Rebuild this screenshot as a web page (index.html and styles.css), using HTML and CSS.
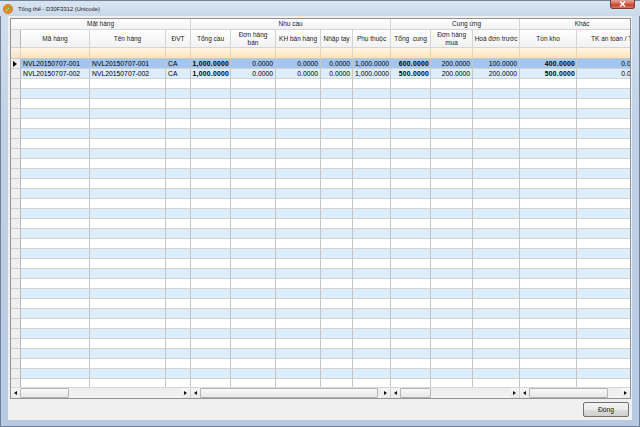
FILE: index.html
```html
<!DOCTYPE html>
<html lang="vi">
<head>
<meta charset="utf-8">
<title>Tổng thể - D30F3312 (Unicode)</title>
<link rel="stylesheet" href="styles.css">
</head>
<body>
<div class="window">
  <div class="titlebar">
    <svg class="app-icon" width="10" height="10" viewBox="0 0 10 10">
      <circle cx="5" cy="5" r="4.6" fill="#f08a1c" stroke="#c25f08" stroke-width="0.6"/>
      <path d="M3 7 C3 4 5 2.5 7.5 2.5 C7.5 5 6 7 3 7 Z" fill="#5fb83a"/>
      <path d="M3 7 L6 4" stroke="#fff" stroke-width="0.6"/>
    </svg>
    <span class="title">Tổng thể - D30F3312 (Unicode)</span>
    <div class="close-btn">
      <svg width="7" height="6" viewBox="0 0 7 6"><path d="M1 0.5 L6 5.5 M6 0.5 L1 5.5" stroke="#fff" stroke-width="1.4"/></svg>
    </div>
  </div>
  <div class="frame">
    <div class="client">
      <div class="grid">
        <div class="grid-body">
          <table class="data">
            <colgroup>
              <col class="c-ind"><col class="c-ma"><col class="c-ten"><col class="c-dvt">
              <col class="c-tc"><col class="c-dhb"><col class="c-kh"><col class="c-nt"><col class="c-pt">
              <col class="c-tcu"><col class="c-dhm"><col class="c-hd">
              <col class="c-ton"><col class="c-tk">
            </colgroup>
            <thead>
              <tr class="band">
                <th colspan="4">Mặt hàng</th>
                <th colspan="5">Nhu cầu</th>
                <th colspan="3" class="cung">Cung ứng</th>
                <th colspan="2">Khác</th>
              </tr>
              <tr class="cols">
                <th class="ind"></th>
                <th>Mã hàng</th>
                <th>Tên hàng</th>
                <th>ĐVT</th>
                <th>Tổng cầu</th>
                <th>Đơn hàng<br>bán</th>
                <th>KH bán hàng</th>
                <th>Nhập tay</th>
                <th>Phụ thuộc</th>
                <th>Tổng&nbsp; cung</th>
                <th>Đơn hàng<br>mua</th>
                <th>Hoá đơn trước</th>
                <th>Tồn kho</th>
                <th class="tk">TK an toàn / Tối thiểu</th>
              </tr>
              <tr class="filter">
                <td class="ind"></td><td></td><td></td><td></td><td></td><td></td><td></td><td></td><td></td><td></td><td></td><td></td><td></td><td></td>
              </tr>
            </thead>
            <tbody>
              <tr class="sel">
                <td class="ind"><span class="cur"></span></td>
                <td>NVL20150707-001</td>
                <td>NVL20150707-001</td>
                <td>CA</td>
                <td class="num b">1,000.0000</td>
                <td class="num">0.0000</td>
                <td class="num">0.0000</td>
                <td class="num">0.0000</td>
                <td class="num">1,000.0000</td>
                <td class="num b">600.0000</td>
                <td class="num">200.0000</td>
                <td class="num">100.0000</td>
                <td class="num b">400.0000</td>
                <td class="num">0.0000</td>
              </tr>
              <tr>
                <td class="ind"></td>
                <td>NVL20150707-002</td>
                <td>NVL20150707-002</td>
                <td>CA</td>
                <td class="num b">1,000.0000</td>
                <td class="num">0.0000</td>
                <td class="num">0.0000</td>
                <td class="num">0.0000</td>
                <td class="num">1,000.0000</td>
                <td class="num b">500.0000</td>
                <td class="num">200.0000</td>
                <td class="num">200.0000</td>
                <td class="num b">500.0000</td>
                <td class="num">0.0000</td>
              </tr>
              <tr><td class="ind"></td><td></td><td></td><td></td><td></td><td></td><td></td><td></td><td></td><td></td><td></td><td></td><td></td><td></td></tr>
              <tr><td class="ind"></td><td></td><td></td><td></td><td></td><td></td><td></td><td></td><td></td><td></td><td></td><td></td><td></td><td></td></tr>
              <tr><td class="ind"></td><td></td><td></td><td></td><td></td><td></td><td></td><td></td><td></td><td></td><td></td><td></td><td></td><td></td></tr>
              <tr><td class="ind"></td><td></td><td></td><td></td><td></td><td></td><td></td><td></td><td></td><td></td><td></td><td></td><td></td><td></td></tr>
              <tr><td class="ind"></td><td></td><td></td><td></td><td></td><td></td><td></td><td></td><td></td><td></td><td></td><td></td><td></td><td></td></tr>
              <tr><td class="ind"></td><td></td><td></td><td></td><td></td><td></td><td></td><td></td><td></td><td></td><td></td><td></td><td></td><td></td></tr>
              <tr><td class="ind"></td><td></td><td></td><td></td><td></td><td></td><td></td><td></td><td></td><td></td><td></td><td></td><td></td><td></td></tr>
              <tr><td class="ind"></td><td></td><td></td><td></td><td></td><td></td><td></td><td></td><td></td><td></td><td></td><td></td><td></td><td></td></tr>
              <tr><td class="ind"></td><td></td><td></td><td></td><td></td><td></td><td></td><td></td><td></td><td></td><td></td><td></td><td></td><td></td></tr>
              <tr><td class="ind"></td><td></td><td></td><td></td><td></td><td></td><td></td><td></td><td></td><td></td><td></td><td></td><td></td><td></td></tr>
              <tr><td class="ind"></td><td></td><td></td><td></td><td></td><td></td><td></td><td></td><td></td><td></td><td></td><td></td><td></td><td></td></tr>
              <tr><td class="ind"></td><td></td><td></td><td></td><td></td><td></td><td></td><td></td><td></td><td></td><td></td><td></td><td></td><td></td></tr>
              <tr><td class="ind"></td><td></td><td></td><td></td><td></td><td></td><td></td><td></td><td></td><td></td><td></td><td></td><td></td><td></td></tr>
              <tr><td class="ind"></td><td></td><td></td><td></td><td></td><td></td><td></td><td></td><td></td><td></td><td></td><td></td><td></td><td></td></tr>
              <tr><td class="ind"></td><td></td><td></td><td></td><td></td><td></td><td></td><td></td><td></td><td></td><td></td><td></td><td></td><td></td></tr>
              <tr><td class="ind"></td><td></td><td></td><td></td><td></td><td></td><td></td><td></td><td></td><td></td><td></td><td></td><td></td><td></td></tr>
              <tr><td class="ind"></td><td></td><td></td><td></td><td></td><td></td><td></td><td></td><td></td><td></td><td></td><td></td><td></td><td></td></tr>
              <tr><td class="ind"></td><td></td><td></td><td></td><td></td><td></td><td></td><td></td><td></td><td></td><td></td><td></td><td></td><td></td></tr>
              <tr><td class="ind"></td><td></td><td></td><td></td><td></td><td></td><td></td><td></td><td></td><td></td><td></td><td></td><td></td><td></td></tr>
              <tr><td class="ind"></td><td></td><td></td><td></td><td></td><td></td><td></td><td></td><td></td><td></td><td></td><td></td><td></td><td></td></tr>
              <tr><td class="ind"></td><td></td><td></td><td></td><td></td><td></td><td></td><td></td><td></td><td></td><td></td><td></td><td></td><td></td></tr>
              <tr><td class="ind"></td><td></td><td></td><td></td><td></td><td></td><td></td><td></td><td></td><td></td><td></td><td></td><td></td><td></td></tr>
              <tr><td class="ind"></td><td></td><td></td><td></td><td></td><td></td><td></td><td></td><td></td><td></td><td></td><td></td><td></td><td></td></tr>
              <tr><td class="ind"></td><td></td><td></td><td></td><td></td><td></td><td></td><td></td><td></td><td></td><td></td><td></td><td></td><td></td></tr>
              <tr><td class="ind"></td><td></td><td></td><td></td><td></td><td></td><td></td><td></td><td></td><td></td><td></td><td></td><td></td><td></td></tr>
              <tr><td class="ind"></td><td></td><td></td><td></td><td></td><td></td><td></td><td></td><td></td><td></td><td></td><td></td><td></td><td></td></tr>
              <tr><td class="ind"></td><td></td><td></td><td></td><td></td><td></td><td></td><td></td><td></td><td></td><td></td><td></td><td></td><td></td></tr>
              <tr><td class="ind"></td><td></td><td></td><td></td><td></td><td></td><td></td><td></td><td></td><td></td><td></td><td></td><td></td><td></td></tr>
              <tr><td class="ind"></td><td></td><td></td><td></td><td></td><td></td><td></td><td></td><td></td><td></td><td></td><td></td><td></td><td></td></tr>
              <tr><td class="ind"></td><td></td><td></td><td></td><td></td><td></td><td></td><td></td><td></td><td></td><td></td><td></td><td></td><td></td></tr>
              <tr><td class="ind"></td><td></td><td></td><td></td><td></td><td></td><td></td><td></td><td></td><td></td><td></td><td></td><td></td><td></td></tr>
            </tbody>
          </table>
        </div>
        <div class="hscroll">
          <div class="sb sb1"><span class="arr left"></span><span class="thumb t1"></span><span class="track"></span><span class="arr right"></span></div>
          <div class="sb sb2"><span class="arr left"></span><span class="thumb t2"></span><span class="track"></span><span class="arr right"></span></div>
          <div class="sb sb3"><span class="arr left"></span><span class="thumb t3"></span><span class="track"></span><span class="arr right"></span></div>
          <div class="sb sb4"><span class="arr left"></span><span class="thumb t4"></span><span class="track"></span><span class="arr right"></span></div>
        </div>
      </div>
      <div class="footer">
        <button class="btn">Đóng</button>
      </div>
    </div>
  </div>
</div>
</body>
</html>
```
FILE: styles.css
```css
html, body {
  margin: 0;
  padding: 0;
}
body {
  width: 640px;
  height: 427px;
  overflow: hidden;
  font-family: "Liberation Sans", Arial, sans-serif;
  color: #000;
}
.window {
  width: 640px;
  height: 427px;
  display: flex;
  flex-direction: column;
  background: linear-gradient(#d3e0ee, #bfd1e6 30%, #b6cae2);
  box-shadow: inset 0 0 0 1px #70819a;
}
.titlebar {
  height: 16px;
  flex: none;
  display: flex;
  align-items: center;
  padding-left: 3px;
  background: linear-gradient(#dbe6f2, #c9d8e9);
  box-shadow: inset 0 1px 0 #70819a;
}
.app-icon {
  flex: none;
  margin-top: 1px;
}
.title {
  margin-left: 5px;
  font-size: 5.8px;
  color: #1b1b1b;
  margin-top: 1px;
}
.close-btn {
  margin-left: auto;
  margin-right: 5px;
  align-self: flex-start;
  width: 25px;
  height: 9px;
  box-sizing: border-box;
  border: 1px solid #7a3a32;
  border-top: none;
  border-radius: 0 0 3px 3px;
  background: linear-gradient(#e6a397, #d2604f 50%, #c53f2c 60%, #d97a66);
  display: flex;
  align-items: center;
  justify-content: center;
}
.frame {
  flex: 1;
  display: flex;
  padding: 0 8px 7px 8px;
  min-height: 0;
}
.client {
  flex: 1;
  display: flex;
  flex-direction: column;
  background: #f0f0f0;
  padding: 2px 1px 0 2px;
  min-width: 0;
}
.grid {
  height: 381px;
  box-sizing: border-box;
  border: 1px solid #8f9296;
  display: flex;
  flex-direction: column;
  background: #fff;
  overflow: hidden;
}
.grid-body {
  height: 368px;
  overflow: hidden;
  flex: none;
}
table.data {
  table-layout: fixed;
  border-collapse: separate;
  border-spacing: 0;
  width: 634px;
}
col.c-ind { width: 10px; }
col.c-ma { width: 69px; }
col.c-ten { width: 76px; }
col.c-dvt { width: 25px; }
col.c-tc { width: 40px; }
col.c-dhb { width: 45px; }
col.c-kh { width: 45px; }
col.c-nt { width: 32px; }
col.c-pt { width: 38px; }
col.c-tcu { width: 40px; }
col.c-dhm { width: 42px; }
col.c-hd { width: 47px; }
col.c-ton { width: 57px; }
col.c-tk { width: 68px; }

th, td {
  padding: 0 2px;
  border-right: 1px solid #c4c4c4;
  border-bottom: 1px solid #d3d3d3;
  overflow: hidden;
  white-space: nowrap;
  font-size: 6.8px;
  font-weight: normal;
}
thead th {
  font-size: 6.5px;
  color: #222;
  text-align: center;
  background: linear-gradient(#ffffff, #f2f2f2);
  border-right-color: #d5d5d5;
  border-bottom-color: #d5d5d5;
  line-height: 8px;
  padding: 0 1px;
}
tr.band { height: 11px; }
tr.band th { line-height: 10px; }
tr.band th.cung { padding-left: 24px; }
tr.cols { height: 18px; }
tr.cols th.tk {
  text-align: left;
  padding-left: 14px;
}
tr.filter { height: 11px; }
tr.filter td {
  background: linear-gradient(#fff6e8, #fde3b6);
  border-right-color: #e6d3b4;
  border-bottom-color: #c9c9c9;
}
tbody tr { height: 10px; }
tbody td {
  line-height: 9px;
  background: #fff;
}
tbody tr:nth-child(even) td {
  background: #dcedfc;
}
tbody tr.sel td {
  background: #a2c6f0;
}
td.ind, th.ind,
tbody tr:nth-child(even) td.ind,
tbody tr.sel td.ind {
  background: #efefef;
  border-right-color: #b8b8b8;
  border-bottom-color: #cfcfcf;
  padding: 0;
}
tr.filter td.ind {
  background: linear-gradient(#fbf3e6, #f3e3c8);
}
.cur {
  display: block;
  width: 0;
  height: 0;
  margin-left: 2px;
  border-left: 4px solid #000;
  border-top: 3px solid transparent;
  border-bottom: 3px solid transparent;
}
td.num { text-align: right; }
td.b {
  font-weight: bold;
  letter-spacing: 0.25px;
  padding: 0 1px 0 0;
}

.hscroll {
  height: 11px;
  flex: none;
  display: flex;
  background: #f0f0f0;
  border-top: 1px solid #d8d8d8;
  box-sizing: border-box;
}
.sb {
  display: flex;
  height: 100%;
  border-right: 1px solid #d0d0d0;
  box-sizing: border-box;
}
.sb1 { width: 180px; }
.sb2 { width: 200px; }
.sb3 { width: 129px; }
.sb4 { flex: 1; border-right: none; }
.arr {
  width: 9px;
  flex: none;
  display: flex;
  align-items: center;
  justify-content: center;
  background: linear-gradient(#f7f7f7, #e9e9e9);
}
.arr::before {
  content: "";
  width: 0;
  height: 0;
  border-top: 2.5px solid transparent;
  border-bottom: 2.5px solid transparent;
}
.arr.left::before { border-right: 3px solid #111; }
.arr.right::before { border-left: 3px solid #111; }
.thumb {
  flex: none;
  box-sizing: border-box;
  border: 1px solid #b5b5b5;
  border-radius: 1px;
  background: linear-gradient(#f9f9f9, #e6e6e6);
}
.t1 { width: 49px; }
.t2 { width: 178px; }
.t3 { width: 31px; }
.t4 { width: 79px; }
.track {
  flex: 1;
  background: linear-gradient(#ececec, #f4f4f4);
}

.footer {
  flex: 1;
  display: flex;
  justify-content: flex-end;
  align-items: flex-start;
  padding-top: 3px;
}
.btn {
  width: 46px;
  height: 15px;
  margin-right: 2px;
  padding: 0;
  box-sizing: border-box;
  border: 1px solid #707070;
  border-radius: 2px;
  background: linear-gradient(#f3f3f3, #ebebeb 50%, #dddddd 51%, #cfcfcf);
  font-family: "Liberation Sans", Arial, sans-serif;
  font-size: 6.8px;
  color: #111;
}
```
